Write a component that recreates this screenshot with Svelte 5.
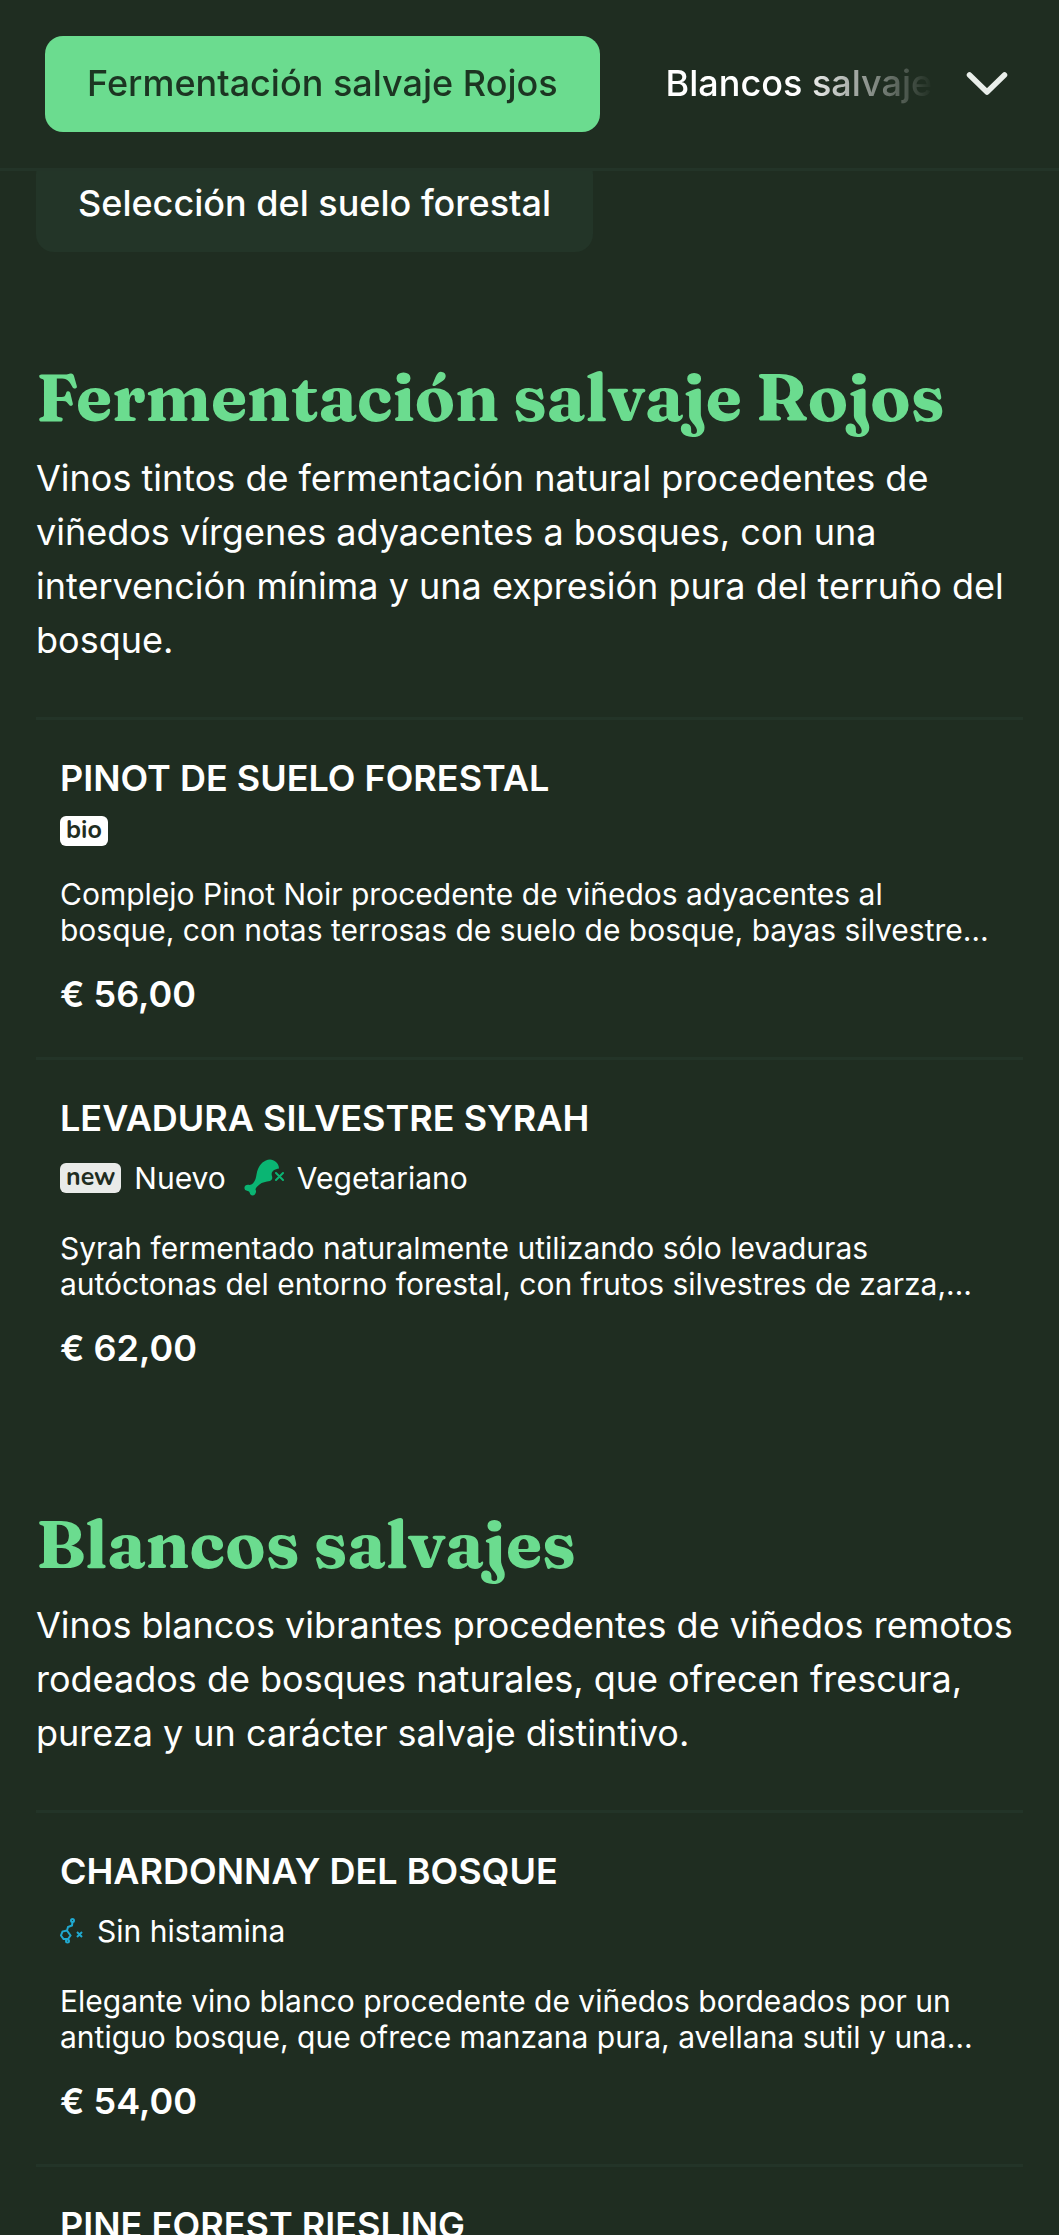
<script>
  let activeTab = 0;

  const tabs = ['Fermentación salvaje Rojos', 'Blancos salvajes'];

  const sections = [
    {
      title: 'Fermentación salvaje Rojos',
      description: 'Vinos tintos de fermentación natural procedentes de viñedos vírgenes adyacentes a bosques, con una intervención mínima y una expresión pura del terruño del bosque.',
      items: [
        {
          name: 'PINOT DE SUELO FORESTAL',
          tags: [{ icon: 'bio' }],
          text: 'Complejo Pinot Noir procedente de viñedos adyacentes al bosque, con notas terrosas de suelo de bosque, bayas silvestre…',
          price: '€ 56,00',
        },
        {
          name: 'LEVADURA SILVESTRE SYRAH',
          tags: [{ icon: 'new', label: 'Nuevo' }, { icon: 'vegetarian', label: 'Vegetariano' }],
          text: 'Syrah fermentado naturalmente utilizando sólo levaduras autóctonas del entorno forestal, con frutos silvestres de zarza,…',
          price: '€ 62,00',
        },
      ],
    },
    {
      title: 'Blancos salvajes',
      description: 'Vinos blancos vibrantes procedentes de viñedos remotos rodeados de bosques naturales, que ofrecen frescura, pureza y un carácter salvaje distintivo.',
      items: [
        {
          name: 'CHARDONNAY DEL BOSQUE',
          tags: [{ icon: 'histamine', label: 'Sin histamina' }],
          text: 'Elegante vino blanco procedente de viñedos bordeados por un antiguo bosque, que ofrece manzana pura, avellana sutil y una…',
          price: '€ 54,00',
        },
        {
          name: 'PINE FOREST RIESLING',
          tags: [],
        },
      ],
    },
  ];
</script>

<div class="page">
  <header class="header">
    <nav class="tabs">
      {#each tabs as tab, i}
        <button class="tab" class:active={activeTab === i} on:click={() => (activeTab = i)}>{tab}</button>
      {/each}
    </nav>
    <button class="expand" aria-label="Mostrar categorías">
      <svg width="42" height="26" viewBox="0 0 42 26">
        <path d="M3.500 4L21 21L38.500 4" fill="none" stroke="#e9eeea" stroke-width="5.500" stroke-linecap="round" stroke-linejoin="round" />
      </svg>
    </button>
  </header>

  <main class="content">
    <button class="chip">Selección del suelo forestal</button>

    {#each sections as section}
      <section class="section">
        <h2 class="section-title">{section.title}</h2>
        <p class="section-description">{section.description}</p>
        {#each section.items as item}
          <article class="item">
            <h3 class="item-name">{item.name}</h3>
            {#if item.tags.length}
              <div class="tags">
                {#each item.tags as tag}
                  <div class="tag">
                    {#if tag.icon === 'bio'}
                      <span class="badge badge-bio">bio</span>
                    {:else if tag.icon === 'new'}
                      <span class="badge badge-new">new</span>
                    {:else if tag.icon === 'vegetarian'}
                      <svg width="40" height="38" viewBox="0 0 40 38">
                        <path d="M26 0.500C30 0.500 35 4 35 9.500C30 10 26.500 13 28 17C28.500 19 28.500 21 26 22C22 23 18 23 15.500 25.500C13.500 27.500 11.500 28.500 11.500 30.500C13 33.500 11 36.500 8.500 36.500C6 36.500 6 33.500 5 32.500C3.500 31.500 1 32 0.500 29.500C0 26.500 3 25 5.500 26C8 26 10.500 23 11.500 20C12.500 17 12.500 13.500 14 10C16 5 20 1 26 0.500Z" fill="#0ab573" />
                        <path d="M32 14L39 21M39 14L32 21" stroke="#0ab573" stroke-width="2" stroke-linecap="round" />
                      </svg>
                    {:else}
                      <svg width="24" height="26" viewBox="0 0 24 26" fill="none" stroke="#20a9d0" stroke-width="2">
                        <path d="M7 12.500L2.500 13.500L1 17.500L3.500 21L8 21L10.500 17.500L7 12.500L8 9L12 7.500L12.500 4" />
                        <circle cx="12.500" cy="2.500" r="1.500" />
                        <circle cx="7.500" cy="23" r="1.500" />
                        <path d="M17 14L22 19M22 14L17 19" />
                      </svg>
                    {/if}
                    {#if tag.label}
                      <span class="tag-label">{tag.label}</span>
                    {/if}
                  </div>
                {/each}
              </div>
            {/if}
            {#if item.text}
              <p class="item-text">{item.text}</p>
              <p class="item-price">{item.price}</p>
            {/if}
          </article>
        {/each}
      </section>
    {/each}
  </main>
</div>

<style>
  :global(body) {
    margin: 0;
    background-color: #1f2d21;
  }

  .page {
    height: 100vh;
    overflow-y: auto;
    scrollbar-width: none;
    background-color: #1f2d21;
    color: #fff;
    font-family: Inter, 'Liberation Sans', sans-serif;
  }

  h2,
  h3,
  p {
    margin: 0;
  }

  button {
    border: 0;
    background: none;
    color: inherit;
    font-family: inherit;
    cursor: pointer;
  }

  .header {
    position: fixed;
    top: 0;
    left: 0;
    right: 0;
    display: flex;
    align-items: center;
    padding: 36px 18px 36px 45px;
    border-bottom: 3px solid #233428;
    background-color: #1f2d21;
  }

  .tabs {
    display: flex;
    flex: 1;
    gap: 24px;
    overflow: hidden;
    mask-image: linear-gradient(to right, #000 calc(100% - 132px), transparent);
  }

  .tab,
  .chip {
    display: block;
    flex: none;
    height: 96px;
    padding: 0 42px 2px;
    border-radius: 18px;
    font-size: 36px;
    font-weight: 500;
    white-space: nowrap;
  }

  .active {
    background-color: #6bdc8f;
    color: #1c3522;
  }

  .expand {
    flex: none;
    display: flex;
    align-items: center;
    justify-content: center;
    width: 108px;
    height: 96px;
    padding: 0;
  }

  .content {
    padding: 156px 36px 0;
  }

  .chip {
    margin-bottom: 12px;
    background-color: #233528;
  }

  .section {
    padding-top: 91px;
  }

  .section-title {
    margin-bottom: 12px;
    color: #6bdc8f;
    font-family: Fraunces, 'Liberation Serif', serif;
    font-size: 66px;
    font-variation-settings: 'opsz' 22;
    font-weight: 700;
    line-height: 84px;
  }

  .section-description {
    margin-bottom: 50px;
    font-size: 36px;
    line-height: 54px;
  }

  .item {
    padding: 36px 24px;
    border-top: 3px solid #233428;
  }

  .item-name {
    font-size: 36px;
    font-weight: 600;
    line-height: 45px;
  }

  .tags {
    display: flex;
    gap: 18px;
    margin: 15px 0 30px;
  }

  .tag {
    display: flex;
    align-items: center;
    gap: 13px;
  }

  .tag-label {
    font-size: 30px;
    line-height: 44px;
  }

  .badge {
    box-sizing: border-box;
    height: 30px;
    padding: 0 6px;
    border-radius: 6px;
    color: #1f2d21;
    font-family: Nunito, Lato, sans-serif;
    font-size: 25px;
    font-weight: 700;
    line-height: 29px;
  }

  .badge-bio {
    background-color: #fff;
  }

  .badge-new {
    background-color: #e9ebe9;
  }

  .item-text {
    margin-bottom: 19px;
    font-size: 30px;
    line-height: 36px;
  }

  .item-price {
    font-size: 36px;
    font-weight: 600;
    line-height: 54px;
  }
</style>
